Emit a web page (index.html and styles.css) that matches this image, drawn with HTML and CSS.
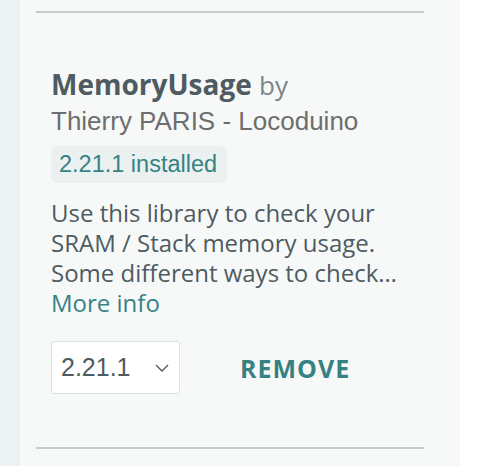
FILE: index.html
```html
<!DOCTYPE html>
<html lang="en">
<head>
    <meta charset="UTF-8">
    <meta name="viewport" content="width=device-width, initial-scale=1.0">
    <title>Library Manager</title>
    <link rel="stylesheet" href="styles.css">
</head>
<body>
    <div class="layout">
        <div class="sidebar-edge"></div>
        <div class="panel">
            <div class="divider"></div>
            <div class="library">
                <div class="lib-title"><span class="lib-name">MemoryUsage</span> <span class="lib-by">by</span></div>
                <div class="lib-author">Thierry PARIS - Locoduino</div>
                <div class="badge">2.21.1 installed</div>
                <p class="lib-desc">
                    Use this library to check your<br>
                    SRAM / Stack memory usage.<br>
                    Some different ways to check…<br>
                    <a class="more-info" href="#">More info</a>
                </p>
                <div class="actions">
                    <div class="version-select">
                        <span>2.21.1</span>
                        <svg width="14" height="8" viewBox="0 0 14 8">
                            <polyline points="1,1 7,7 13,1" fill="none" stroke="#4e5b61" stroke-width="1.4"/>
                        </svg>
                    </div>
                    <button class="remove-btn">REMOVE</button>
                </div>
            </div>
            <div class="divider"></div>
        </div>
    </div>
</body>
</html>
```

FILE: styles.css
```css
body {
    margin: 0;
    background: #fff;
    font-family: "Open Sans", sans-serif;
}

.layout {
    display: flex;
    height: 466px;
}

.sidebar-edge {
    width: 20px;
    background: #ecf1f1;
}

.panel {
    width: 440px;
    background: #f7f9f9;
    padding: 11px 36px 0 16px;
    box-sizing: border-box;
}

.divider {
    height: 2px;
    background: #c5cdca;
}

.library {
    padding: 52px 0 53px 15px;
}

.lib-title {
    height: 38px;
    line-height: 38px;
    font-size: 28px;
}

.lib-name {
    font-weight: 700;
    color: #4e5b61;
}

.lib-by {
    font-size: 26px;
    color: #7a8588;
}

.lib-author {
    height: 37px;
    font-family: "Liberation Sans", Arial, sans-serif;
    font-size: 26px;
    line-height: 37px;
    color: #6e6e6e;
}

.badge {
    display: inline-block;
    margin-top: 6px;
    padding: 0 10px 0 8px;
    height: 37px;
    line-height: 37px;
    font-family: "Liberation Sans", Arial, sans-serif;
    font-size: 23.5px;
    color: #368282;
    background: #ebf0f0;
    border-radius: 6px;
    vertical-align: top;
}

.lib-desc {
    margin: 15px 0 0;
    font-size: 24px;
    line-height: 30px;
    color: #4e5b61;
}

.more-info {
    color: #368282;
    text-decoration: none;
}

.actions {
    display: flex;
    align-items: center;
    margin-top: 23px;
}

.version-select {
    display: flex;
    align-items: center;
    justify-content: space-between;
    box-sizing: border-box;
    width: 129px;
    height: 53px;
    padding: 0 10px 0 9px;
    background: #fff;
    border: 1px solid #dae3e3;
    border-radius: 3px;
    font-family: "Liberation Sans", Arial, sans-serif;
    font-size: 25px;
    color: #4e5b61;
}

.remove-btn {
    margin-left: 44px;
    padding: 0 16px;
    border: none;
    background: none;
    font-family: "Open Sans", sans-serif;
    font-weight: 700;
    font-size: 25px;
    letter-spacing: 1px;
    color: #368282;
    cursor: pointer;
}
```
